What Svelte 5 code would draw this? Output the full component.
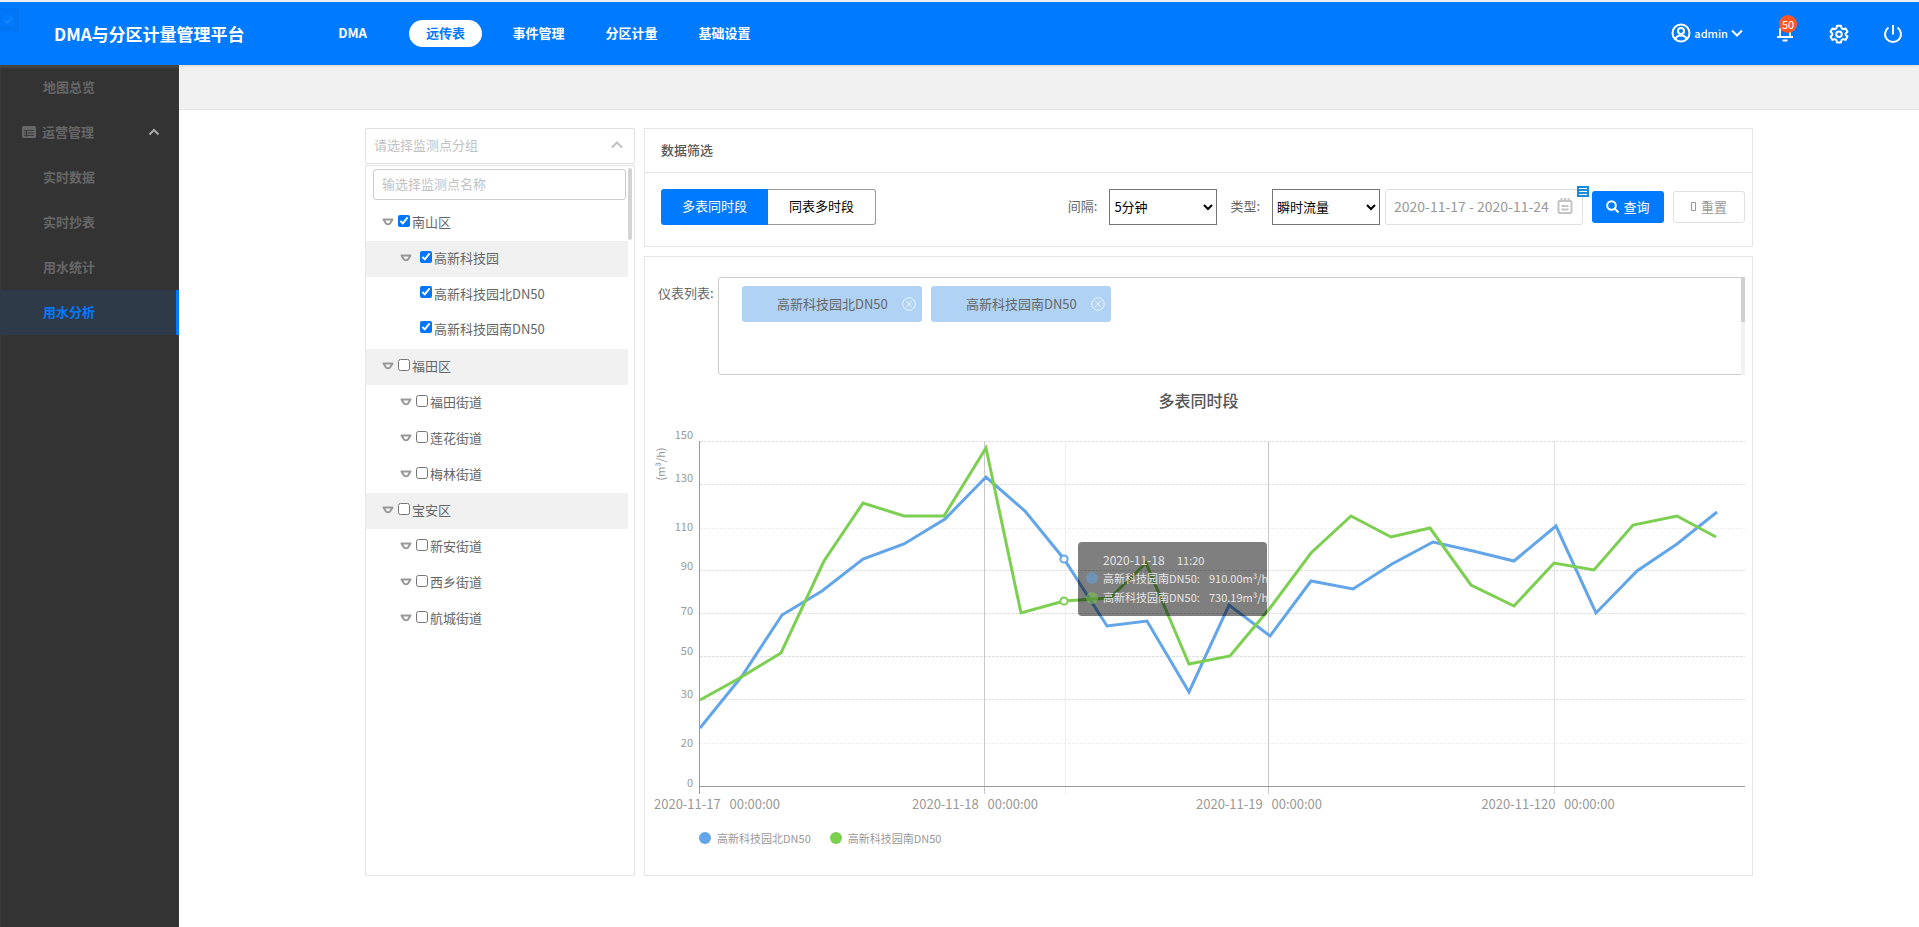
<script>
  const nav = ['DMA', '远传表', '事件管理', '分区计量', '基础设置'];
  let activeNav = $state('远传表');

  const menu = ['实时数据', '实时抄表', '用水统计', '用水分析'];
  let activeMenu = $state('用水分析');

  let tree = $state([
    { label: '南山区', level: 1, checked: true },
    { label: '高新科技园', level: 2, checked: true, shaded: true, wide: true },
    { label: '高新科技园北DN50', level: 3, checked: true },
    { label: '高新科技园南DN50', level: 3, checked: true },
    { label: '福田区', level: 1, checked: false, shaded: true },
    { label: '福田街道', level: 2, checked: false },
    { label: '莲花街道', level: 2, checked: false },
    { label: '梅林街道', level: 2, checked: false },
    { label: '宝安区', level: 1, checked: false, shaded: true },
    { label: '新安街道', level: 2, checked: false },
    { label: '西乡街道', level: 2, checked: false },
    { label: '航城街道', level: 2, checked: false }
  ]);

  const modes = ['多表同时段', '同表多时段'];
  let mode = $state('多表同时段');
  let dates = $state('2020-11-17 - 2020-11-24');
  let meters = $state(['高新科技园北DN50', '高新科技园南DN50']);

  const rows = [
    { y: 17, label: '150', ly: 15 },
    { y: 60, label: '130', ly: 58 },
    { y: 104, label: '110', ly: 107, faint: true },
    { y: 146, label: '90', ly: 146 },
    { y: 189, label: '70', ly: 191 },
    { y: 232, label: '50', ly: 231 },
    { y: 275, label: '30', ly: 274 },
    { y: 319, label: '20', ly: 323, faint: true }
  ];
  const gap = '\u00a0\u00a0\u00a0';
  const ticks = [
    { x: 72, label: `2020-11-17${gap}00:00:00` },
    { x: 330, label: `2020-11-18${gap}00:00:00` },
    { x: 614, label: `2020-11-19${gap}00:00:00` },
    { x: 903, label: `2020-11-120${gap}00:00:00` }
  ];
  const north = [
    [55, 304], [97, 252], [137, 191], [177, 167], [218, 135], [259, 120], [300, 95], [341, 53],
    [380, 87], [419, 135], [462, 202], [502, 197], [544, 268], [584, 181], [625, 212], [666, 157],
    [708, 165], [747, 140], [788, 118], [828, 127], [869, 137], [911, 102], [951, 189], [992, 147],
    [1032, 120], [1072, 88]
  ];
  const south = [
    [55, 276], [93, 255], [136, 229], [179, 137], [218, 79], [259, 92], [299, 92], [341, 24],
    [376, 189], [419, 177], [465, 174], [501, 139], [544, 240], [585, 232], [625, 184], [666, 129],
    [706, 92], [746, 113], [785, 104], [826, 161], [869, 182], [909, 139], [949, 146], [988, 101],
    [1032, 92], [1071, 113]
  ];
  const toPoints = (list) => list.map((p) => p.join(',')).join(' ');
</script>

<div class="page">
  <header class="topbar">
    <svg class="ghost" width="19" height="24" viewBox="0 0 19 24" aria-hidden="true">
      <rect width="19" height="24" fill="#0076f6" />
      <rect x="3" y="7" width="11" height="11" rx="2" fill="#007bff" />
      <path d="M5 12.500l2.500 2.500 4.500-5.500" fill="none" stroke="#1a88ff" stroke-width="1.500" />
    </svg>
    <h1>DMA与分区计量管理平台</h1>
    <nav>
      {#each nav as item}
        <button class:on={item === activeNav} onclick={() => (activeNav = item)}>{item}</button>
      {/each}
    </nav>
    <div class="tools">
      <button class="user">
        <svg width="20" height="20" viewBox="0 0 20 20" fill="none" stroke="#fff" stroke-width="2">
          <circle cx="10" cy="10" r="8.500" />
          <circle cx="10" cy="8" r="3" />
          <path d="M4.300 16c1-2.600 3-3.600 5.700-3.600s4.700 1 5.700 3.600" />
        </svg>
        <span>admin</span>
        <svg width="12" height="8" viewBox="0 0 12 8" fill="none" stroke="#fff" stroke-width="2">
          <path d="M1 1.500l5 5 5-5" />
        </svg>
      </button>
      <button class="bell" aria-label="消息">
        <svg width="16" height="20" viewBox="0 0 16 20" fill="none" stroke="#fff" stroke-width="2">
          <path d="M3 15V9c0-3.500 2-5 5-5s5 1.500 5 5v6M0 15h16" />
          <path d="M5.500 18.500h5" />
        </svg>
        <b>50</b>
      </button>
      <button aria-label="设置">
        <svg width="20" height="20" viewBox="0 0 20 20" fill="none" stroke="#fff" stroke-width="2" stroke-linejoin="round">
          <path d="M8 1.800h4l.6 2.500 1.500.9 2.500-.8 1.900 3.300-1.800 1.700v1.500l1.800 1.700-1.900 3.300-2.500-.8-1.500.9-.6 2.400H8L7.400 16l-1.500-.9-2.500.8-1.900-3.300 1.800-1.700V9.400L1.500 7.700l1.900-3.300 2.500.8 1.500-.9z" />
          <circle cx="10" cy="10.200" r="2.800" />
        </svg>
      </button>
      <button aria-label="退出">
        <svg width="20" height="20" viewBox="0 0 20 20" fill="none" stroke="#fff" stroke-width="2">
          <path d="M5.500 3.500a8 8 0 1 0 9 0M10 1v9.500" />
        </svg>
      </button>
    </div>
  </header>

  <div class="body">
    <aside>
      <a href="#map">地图总览</a>
      <a href="#ops" class="parent">
        <svg width="14" height="12" viewBox="0 0 14 12" aria-hidden="true">
          <rect width="14" height="12" rx="1.500" fill="#666" />
          <path d="M2 4.500h10M2 7h10M2 9.500h10M4.500 4v6.500" stroke="#3a3a3a" />
        </svg>
        <span>运营管理</span>
        <svg class="arrow" width="12" height="8" viewBox="0 0 12 8" fill="none" stroke="#aaa" stroke-width="2">
          <path d="M1.500 6.500L6 2l4.500 4.500" />
        </svg>
      </a>
      {#each menu as item}
        <a href="#menu" class:active={item === activeMenu} onclick={() => (activeMenu = item)}>{item}</a>
      {/each}
    </aside>

    <main>
      <div class="strip"></div>
      <div class="content">
        <section class="left">
          <button class="picker">
            <span>请选择监测点分组</span>
            <svg width="12" height="8" viewBox="0 0 12 8" fill="none" stroke="#c2c2c2" stroke-width="2">
              <path d="M1 6.500l5-5 5 5" />
            </svg>
          </button>
          <div class="tree">
            <input class="search" type="text" placeholder="输选择监测点名称" aria-label="监测点名称" />
            <ul>
              {#each tree as node}
                <li class="l{node.level}" class:shaded={node.shaded} class:wide={node.wide}>
                  {#if node.level < 3}
                    <svg width="12" height="8" viewBox="0 0 12 8" fill="none" stroke="#999" stroke-width="2" stroke-linejoin="round">
                      <path d="M1.500 1.500h9L8 5.500Q6 7 4 5.500z" />
                    </svg>
                  {/if}
                  <label><input type="checkbox" bind:checked={node.checked} />{node.label}</label>
                </li>
              {/each}
            </ul>
            <i class="thumb"></i>
          </div>
        </section>

        <div class="right">
          <section class="card">
            <h2>数据筛选</h2>
            <div class="filters">
              <div class="modes">
                {#each modes as m}
                  <button class:on={m === mode} onclick={() => (mode = m)}>{m}</button>
                {/each}
              </div>
              <label for="step">间隔:</label>
              <select id="step"><option>5分钟</option></select>
              <label for="kind">类型:</label>
              <select id="kind"><option>瞬时流量</option></select>
              <div class="range">
                <input type="text" bind:value={dates} aria-label="日期范围" />
                <svg width="16" height="16" viewBox="0 0 16 16" fill="none" stroke="#c4c4c4" stroke-width="2">
                  <rect x="1.500" y="3" width="13" height="12" rx="1" />
                  <path d="M4.500 0v4M8 0v4M11.500 0v4M4.500 8h7M4.500 11.500h7" />
                </svg>
                <svg class="note" width="12" height="11" viewBox="0 0 12 11" aria-hidden="true">
                  <rect width="12" height="11" fill="#1a8cdc" />
                  <path d="M2 2.500h8M2 5.500h8M2 8.500h8" stroke="#fff" />
                </svg>
              </div>
              <button class="act primary">
                <svg width="13" height="13" viewBox="0 0 13 13" fill="none" stroke="#fff" stroke-width="2">
                  <circle cx="5.500" cy="5.500" r="4.300" />
                  <path d="M8.500 8.500l4 4" />
                </svg>
                查询
              </button>
              <button class="act">
                <svg width="6" height="9" viewBox="0 0 6 9" fill="none" stroke="#999"><path d="M.5.500h4v8h-4z" /></svg>
                重置
              </button>
            </div>
          </section>

          <section class="card chart-card">
            <div class="meters">
              <span class="name">仪表列表:</span>
              <div class="box">
                {#each meters as meter}
                  <span class="chip">
                    {meter}
                    <button aria-label="移除{meter}" onclick={() => (meters = meters.filter((x) => x !== meter))}>
                      <svg width="14" height="14" viewBox="0 0 14 14" fill="none" stroke="#eef6ff">
                        <circle cx="7" cy="7" r="6.300" />
                        <path d="M4 4l6 6M10 4l-6 6" />
                      </svg>
                    </button>
                  </span>
                {/each}
                <i class="track"><i></i></i>
              </div>
            </div>
            <h3>多表同时段</h3>
            <svg class="chart" viewBox="0 0 1107 392" role="img" aria-label="多表同时段">
              {#each rows as r}
                <path d="M55 {r.y}.500H1100" stroke={r.faint ? '#f0f0f0' : '#e0e0e0'} stroke-dasharray="3 1" />
                <text class="tick" x="48" y={r.ly} text-anchor="end">{r.label}</text>
              {/each}
              <text class="tick" x="48" y="363" text-anchor="end">0</text>
              <text class="tick" transform="translate(20 40) rotate(-90)" text-anchor="middle">(m³/h)</text>
              <path d="M420.500 17V370" stroke="#efefef" />
              <path d="M339.500 17V370M623.500 17V370" stroke="#c8c8c8" />
              <path d="M909.500 17V370" stroke="#dedede" />
              <path d="M54.500 17V370M54 362.500H1100" stroke="#999" />
              {#each ticks as t}
                <text class="date" x={t.x} y="385" text-anchor="middle">{t.label}</text>
              {/each}
              <g fill="none" stroke-width="3" stroke-linejoin="miter">
                <polyline points={toPoints(north)} stroke="#62a5e8" />
                <polyline points={toPoints(south)} stroke="#7dcf52" />
              </g>
              <g fill="#fff" stroke-width="2">
                <circle cx="419" cy="135" r="3.600" stroke="#62a5e8" />
                <circle cx="419" cy="177" r="3.600" stroke="#7dcf52" />
              </g>
              <rect x="433" y="118" width="189" height="74" rx="4" fill="#000" fill-opacity=".5" />
              <circle cx="447" cy="154" r="6" fill="#62a5e8" fill-opacity=".5" />
              <circle cx="447" cy="174" r="6" fill="#7dcf52" fill-opacity=".5" />
              <g class="tip">
                <text class="when" x="458" y="141">2020-11-18</text>
                <text x="532" y="141">11:20</text>
                <text x="458" y="159">高新科技园南DN50:</text>
                <text x="564" y="159">910.00m³/h</text>
                <text x="458" y="178">高新科技园南DN50:</text>
                <text x="564" y="178">730.19m³/h</text>
              </g>
            </svg>
            <div class="legend">
              <span><i class="blue"></i>高新科技园北DN50</span>
              <span><i class="green"></i>高新科技园南DN50</span>
            </div>
          </section>
        </div>
      </div>
    </main>
  </div>
</div>

<style>
  :global(body) {
    margin: 0;
    background: #fff;
  }
  .page,
  .page button,
  .page input,
  .page select {
    font-family: 'Noto Sans CJK SC', 'Open Sans', sans-serif;
    font-size: 13px;
    line-height: 20px;
  }
  .page {
    min-height: 100vh;
    display: flex;
    flex-direction: column;
    color: #666;
  }
  .page * {
    box-sizing: border-box;
  }
  .page svg {
    flex: none;
  }
  button {
    border: 0;
    padding: 0;
    background: none;
    color: inherit;
    cursor: pointer;
  }
  h1,
  h2,
  h3,
  ul {
    margin: 0;
    padding: 0;
  }

  .topbar {
    position: relative;
    z-index: 1;
    height: 65px;
    border-top: 2px solid #eceff2;
    background: #007aff;
    color: #fff;
    display: flex;
    align-items: center;
    padding: 0 16px 0 54px;
    box-shadow: 0 1px 3px rgba(0, 0, 0, 0.12);
  }
  .ghost {
    position: absolute;
    left: 0;
    top: 6px;
  }
  h1 {
    width: 252px;
    font-size: 17px;
    line-height: 24px;
    white-space: nowrap;
  }
  nav {
    display: grid;
    grid-template-columns: repeat(5, 93px);
    justify-items: center;
  }
  nav button {
    height: 27px;
    padding: 0 17px 2px;
    border-radius: 14px;
    font-weight: 700;
    white-space: nowrap;
  }
  nav .on {
    background: #fff;
    color: #007aff;
  }
  .tools {
    margin-left: auto;
    display: flex;
    align-items: center;
    gap: 34px;
  }
  .tools button {
    display: flex;
    align-items: center;
  }
  .tools .user {
    gap: 3px;
    padding-bottom: 2px;
  }
  .user span {
    font-size: 11px;
    font-weight: 500;
  }
  .tools .bell {
    position: relative;
    margin-right: 2px;
    padding-bottom: 3px;
  }
  .bell b {
    position: absolute;
    left: 2px;
    top: -7px;
    width: 18px;
    height: 18px;
    border-radius: 9px;
    background: #ff5722;
    font-size: 11px;
    font-weight: 400;
    line-height: 18px;
  }

  .body {
    flex: 1;
    display: flex;
  }
  aside {
    width: 179px;
    flex: none;
    background: #333;
    box-shadow: inset 0 3px 2px #4a4a4a;
  }
  aside a {
    display: flex;
    align-items: center;
    height: 45px;
    padding: 0 0 2px 43px;
    color: #666;
    font-weight: 700;
    text-decoration: none;
  }
  aside .parent {
    padding: 0 19px 2px 22px;
    gap: 6px;
  }
  .arrow {
    margin-left: auto;
  }
  aside .active {
    background: #2e3a48;
    color: #007aff;
    border-right: 3px solid #007aff;
  }
  main {
    flex: 1;
    min-width: 0;
  }
  .strip {
    height: 45px;
    background: #f1f1f1;
    border-bottom: 1px solid #e6e6e6;
  }
  .content {
    display: grid;
    grid-template-columns: 270px minmax(0, 1fr);
    gap: 9px;
    padding: 18px 166px 18px 186px;
  }

  .left {
    display: flex;
    flex-direction: column;
    gap: 1px;
  }
  .picker {
    display: flex;
    align-items: center;
    justify-content: space-between;
    height: 36px;
    padding: 0 11px 2px 8px;
    border: 1px solid #e0e0e0;
    border-radius: 2px;
    color: #c2c2c2;
  }
  .tree {
    flex: 1;
    position: relative;
    border: 1px solid #e6e6e6;
    padding: 3px 6px 0 0;
  }
  .search {
    display: block;
    width: calc(100% - 9px);
    height: 31px;
    margin: 0 2px 5px 7px;
    padding: 0 8px 2px;
    border: 1px solid #ccc;
    border-radius: 3px;
    color: #666;
  }
  .search::placeholder {
    color: #c2c2c2;
  }
  .thumb {
    position: absolute;
    right: 2px;
    top: 2px;
    width: 4px;
    height: 72px;
    border-radius: 2px;
    background: #d4d4d4;
  }
  ul {
    list-style: none;
  }
  li {
    display: flex;
    align-items: center;
    gap: 4px;
    height: 36px;
    padding: 0 0 2px 16px;
  }
  li.l2 {
    padding-left: 34px;
    gap: 4px;
  }
  li.wide {
    gap: 8px;
  }
  li.l3 {
    height: 35px;
    padding-left: 54px;
  }
  li.l3 + li.l1 {
    margin-top: 2px;
  }
  li.shaded {
    background: #f1f1f1;
  }
  li label {
    display: flex;
    align-items: center;
    gap: 2px;
  }
  li input {
    width: 12px;
    height: 12px;
    margin: 0 0 3px;
  }

  .right {
    display: flex;
    flex-direction: column;
    gap: 9px;
  }
  .card {
    border: 1px solid #e6e6e6;
  }
  h2 {
    height: 44px;
    padding-left: 16px;
    border-bottom: 1px solid #e6e6e6;
    font-size: 13px;
    line-height: 41px;
    font-weight: 500;
    color: #555;
  }
  .filters {
    display: flex;
    align-items: center;
    padding: 16px 7px 21px 16px;
  }
  .filters > label {
    padding-bottom: 2px;
  }
  .modes {
    display: flex;
    margin-right: auto;
  }
  .modes button {
    width: 108px;
    height: 36px;
    padding-bottom: 2px;
    border: 1px solid #999;
    border-left: 0;
    border-radius: 0 3px 3px 0;
    color: #000;
  }
  .modes .on {
    width: 107px;
    border: 0;
    border-radius: 3px 0 0 3px;
    background: #007aff;
    color: #fff;
  }
  .filters select {
    width: 108px;
    height: 36px;
    margin: 0 13px 0 12px;
    padding-bottom: 2px;
    border: 1px solid #767676;
    border-radius: 0;
    background: #fff;
    color: #000;
  }
  .filters #kind {
    margin-right: 5px;
  }
  .range {
    position: relative;
    display: flex;
    align-items: center;
    width: 198px;
    height: 36px;
    margin-right: 9px;
    padding: 0 9px 2px 8px;
    border: 1px solid #e0e0e0;
    border-radius: 3px;
  }
  .range input {
    flex: 1;
    min-width: 0;
    padding: 0;
    border: 0;
    font-size: 14px;
    color: #999;
  }
  .range .note {
    position: absolute;
    right: -7px;
    top: -4px;
  }
  .act {
    display: flex;
    align-items: center;
    justify-content: center;
    gap: 4px;
    width: 72px;
    height: 32px;
    padding-bottom: 1px;
    border: 1px solid #e0e0e0;
    border-radius: 3px;
    color: #999;
  }
  .primary {
    margin-right: 9px;
    border: 0;
    background: #007aff;
    color: #fff;
  }

  .chart-card {
    padding-top: 20px;
  }
  .meters {
    display: flex;
    padding: 0 7px 0 13px;
    gap: 5px;
  }
  .name {
    width: 55px;
    padding-top: 6px;
    white-space: nowrap;
  }
  .box {
    flex: 1;
    position: relative;
    display: flex;
    gap: 9px;
    height: 98px;
    padding: 8px 23px;
    border: 1px solid #ccc;
    border-radius: 3px;
  }
  .chip {
    display: flex;
    align-items: center;
    justify-content: space-between;
    width: 180px;
    height: 36px;
    padding: 0 6px 1px 35px;
    border-radius: 3px;
    background: #b0d2f5;
  }
  .chip button {
    display: flex;
  }
  .track {
    position: absolute;
    right: -1px;
    top: -1px;
    width: 4px;
    height: 98px;
    background: #f1f1f1;
  }
  .track i {
    display: block;
    height: 45px;
    background: #d0d0d0;
  }
  h3 {
    padding-top: 13px;
    font-size: 16px;
    line-height: 24px;
    font-weight: 500;
    color: #555;
    text-align: center;
  }
  .chart {
    display: block;
    width: 100%;
    height: auto;
    margin-top: 12px;
  }
  .chart text {
    fill: #999;
    font-size: 11px;
  }
  .chart .date {
    font-size: 13px;
  }
  .chart .tip text {
    fill: #e6e6e6;
  }
  .chart .tip .when {
    font-size: 12px;
  }
  .legend {
    display: flex;
    gap: 19px;
    padding: 12px 54px 27px;
    font-size: 11px;
    color: #999;
  }
  .legend span {
    display: flex;
    align-items: center;
    gap: 6px;
  }
  .legend i {
    width: 12px;
    height: 12px;
    border-radius: 50%;
  }
  .blue {
    background: #62a5e8;
  }
  .green {
    background: #7dcf52;
  }
</style>
